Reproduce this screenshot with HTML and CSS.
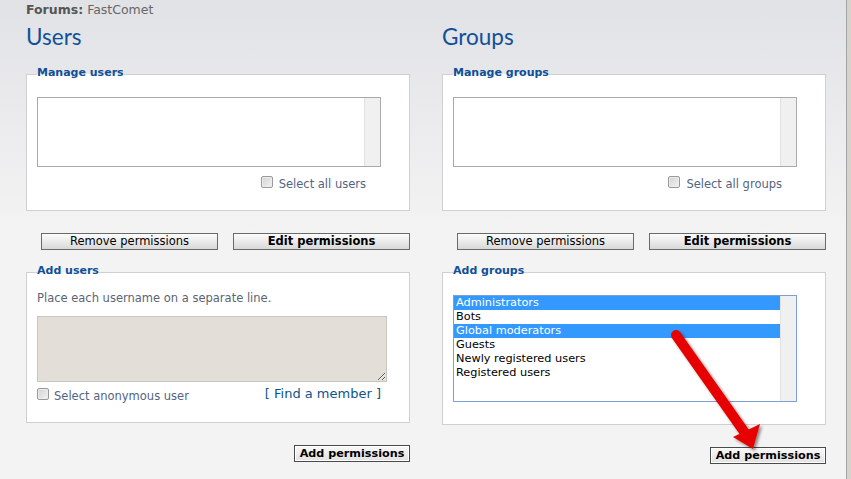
FILE: index.html
```html
<!DOCTYPE html>
<html lang="en">
<head>
    <meta charset="UTF-8">
    <meta name="viewport" content="width=device-width, initial-scale=1.0">
    <title>Forum permissions</title>
    <link rel="stylesheet" href="styles.css">
</head>
<body>
    <div class="page">
        <p class="crumb"><b>Forums:</b> FastComet</p>
        <div class="columns">
            <!-- Users -->
            <div class="col">
                <h1>Users</h1>
                <fieldset class="box box-manage">
                    <legend>Manage users</legend>
                    <div class="listbox list-empty">
                        <div class="list-items"></div>
                        <div class="track"></div>
                    </div>
                    <label class="check-row"><input type="checkbox"> Select all users</label>
                </fieldset>
                <div class="actions">
                    <button class="btn">Remove permissions</button>
                    <button class="btn strong">Edit permissions</button>
                </div>
                <fieldset class="box box-add">
                    <legend>Add users</legend>
                    <p class="explain">Place each username on a separate line.</p>
                    <textarea class="names"></textarea>
                    <div class="add-foot">
                        <label class="check-inline"><input type="checkbox"> Select anonymous user</label>
                        <a class="find" href="#">[ Find a member ]</a>
                    </div>
                </fieldset>
                <div class="submit-row">
                    <button class="btn submit">Add permissions</button>
                </div>
            </div>
            <!-- Groups -->
            <div class="col">
                <h1>Groups</h1>
                <fieldset class="box box-manage">
                    <legend>Manage groups</legend>
                    <div class="listbox list-empty">
                        <div class="list-items"></div>
                        <div class="track"></div>
                    </div>
                    <label class="check-row"><input type="checkbox"> Select all groups</label>
                </fieldset>
                <div class="actions">
                    <button class="btn">Remove permissions</button>
                    <button class="btn strong">Edit permissions</button>
                </div>
                <fieldset class="box box-groups">
                    <legend>Add groups</legend>
                    <div class="listbox list-groups">
                        <div class="list-items">
                            <div class="opt selected">Administrators</div>
                            <div class="opt">Bots</div>
                            <div class="opt selected">Global moderators</div>
                            <div class="opt">Guests</div>
                            <div class="opt">Newly registered users</div>
                            <div class="opt">Registered users</div>
                        </div>
                        <div class="track"></div>
                    </div>
                </fieldset>
                <div class="submit-row">
                    <button class="btn submit">Add permissions</button>
                </div>
            </div>
        </div>

        <!-- red arrow drawn over the screenshot -->
        <svg class="arrow" width="851" height="479" viewBox="0 0 851 479">
            <defs>
                <filter id="shade" x="-20%" y="-20%" width="140%" height="140%">
                    <feDropShadow dx="2" dy="2" stdDeviation="1.5" flood-color="#000" flood-opacity="0.45"/>
                </filter>
            </defs>
            <g filter="url(#shade)">
                <line x1="676" y1="335" x2="745" y2="433" stroke="#e60000" stroke-width="10" stroke-linecap="round"/>
                <polygon points="733,437 760,424 753,449" fill="#e60000"/>
            </g>
        </svg>
    </div>
</body>
</html>
```

FILE: styles.css
```css
body {
    margin: 0;
    background: #d6d3cc;
    font-family: "DejaVu Sans", Verdana, sans-serif;
    font-size: 11.5px;
    color: #536482;
}
.page {
    position: relative;
    box-sizing: border-box;
    width: 847px;
    min-height: 479px;
    padding-left: 26px;
    border-right: 1px solid #a4a4a4;
    background: linear-gradient(to bottom, #e1e2e6 0, #f3f3f3 230px);
    overflow: hidden;
}
.crumb {
    margin: 0;
    padding-top: 2px;
    font-size: 12.5px;
    line-height: 15px;
    color: #666;
}
.crumb b {
    color: #555;
}
.columns {
    display: grid;
    grid-template-columns: 384px 384px;
    column-gap: 32px;
}
h1 {
    margin: 6px 0 0;
    font-family: Lato, "DejaVu Sans", sans-serif;
    font-weight: normal;
    font-size: 22.5px;
    line-height: 28px;
    color: #115098;
}
.box {
    margin: 0;
    min-width: 0;
    border: 1px solid #d0d0d0;
    background: #fff;
    padding: 14px 10px 18px;
}
.box legend {
    padding: 0 0 4px;
    font-weight: bold;
    font-size: 11px;
    line-height: 13px;
    color: #115098;
}
.box-manage {
    margin-top: 15px;
}
.box-add {
    margin-top: 14px;
    padding-top: 10px;
}
.box-groups {
    margin-top: 14px;
    padding-bottom: 22px;
}
.listbox {
    display: flex;
    width: 344px;
    box-sizing: border-box;
    border: 1px solid #a9a9a9;
    background: #fff;
}
.list-empty {
    height: 70px;
}
.list-groups {
    height: 107px;
    border-color: #7d9fd6;
}
.list-items {
    flex: 1;
}
.track {
    width: 15px;
    background: #f0f0f0;
    border-left: 1px solid #e2e2e2;
}
.opt {
    padding-left: 2px;
    font-size: 11.3px;
    line-height: 14px;
    color: #000;
}
.opt.selected {
    background: #3399ff;
    color: #fff;
}
.check-row {
    display: flex;
    justify-content: flex-end;
    align-items: flex-start;
    gap: 6px;
    width: 344px;
    box-sizing: border-box;
    padding-right: 15px;
    margin-top: 9px;
    line-height: 16px;
}
input[type="checkbox"] {
    appearance: none;
    margin: 0;
    width: 12px;
    height: 12px;
    border: 1px solid #9a9a9a;
    border-radius: 2px;
    background: linear-gradient(135deg, #d2d2d2, #f3f3f3);
    box-shadow: inset 0 0 0 1px #ececec;
}
.actions {
    display: flex;
    justify-content: flex-end;
    gap: 15px;
    margin-top: 22px;
}
.btn {
    box-sizing: border-box;
    height: 17px;
    padding: 0;
    border: 1px solid #6a6a6a;
    background: linear-gradient(to bottom, #fdfdfd, #d8d8d8);
    font-family: "DejaVu Sans", Verdana, sans-serif;
    font-size: 11.5px;
    line-height: 15px;
    color: #000;
}
.actions .btn {
    width: 177px;
}
.btn.strong {
    font-weight: bold;
}
.submit-row {
    display: flex;
    justify-content: flex-end;
    margin-top: 22px;
}
.btn.submit {
    width: 116px;
    font-size: 11.2px;
    font-weight: bold;
    border-color: #4a4a4a;
    background: linear-gradient(to bottom, #f8f8f8, #e2e2e2);
    box-shadow: inset 0 0 0 1px #fff;
}
.explain {
    margin: 0;
    line-height: 14px;
    color: #5b6474;
}
.names {
    display: block;
    box-sizing: border-box;
    width: 350px;
    height: 66px;
    margin: 11px 0 0;
    border: 1px solid #c9c6bf;
    background: #e3dfd8;
    resize: both;
}
.add-foot {
    display: flex;
    justify-content: space-between;
    align-items: flex-start;
    width: 350px;
    margin-top: 6px;
}
.check-inline {
    display: flex;
    align-items: flex-start;
    gap: 5px;
    line-height: 16px;
}
.find {
    margin: -2px 6px 0 0;
    font-size: 13px;
    line-height: 16px;
    color: #105289;
    text-decoration: none;
}
.arrow {
    position: absolute;
    left: 0;
    top: 0;
    pointer-events: none;
}
```
